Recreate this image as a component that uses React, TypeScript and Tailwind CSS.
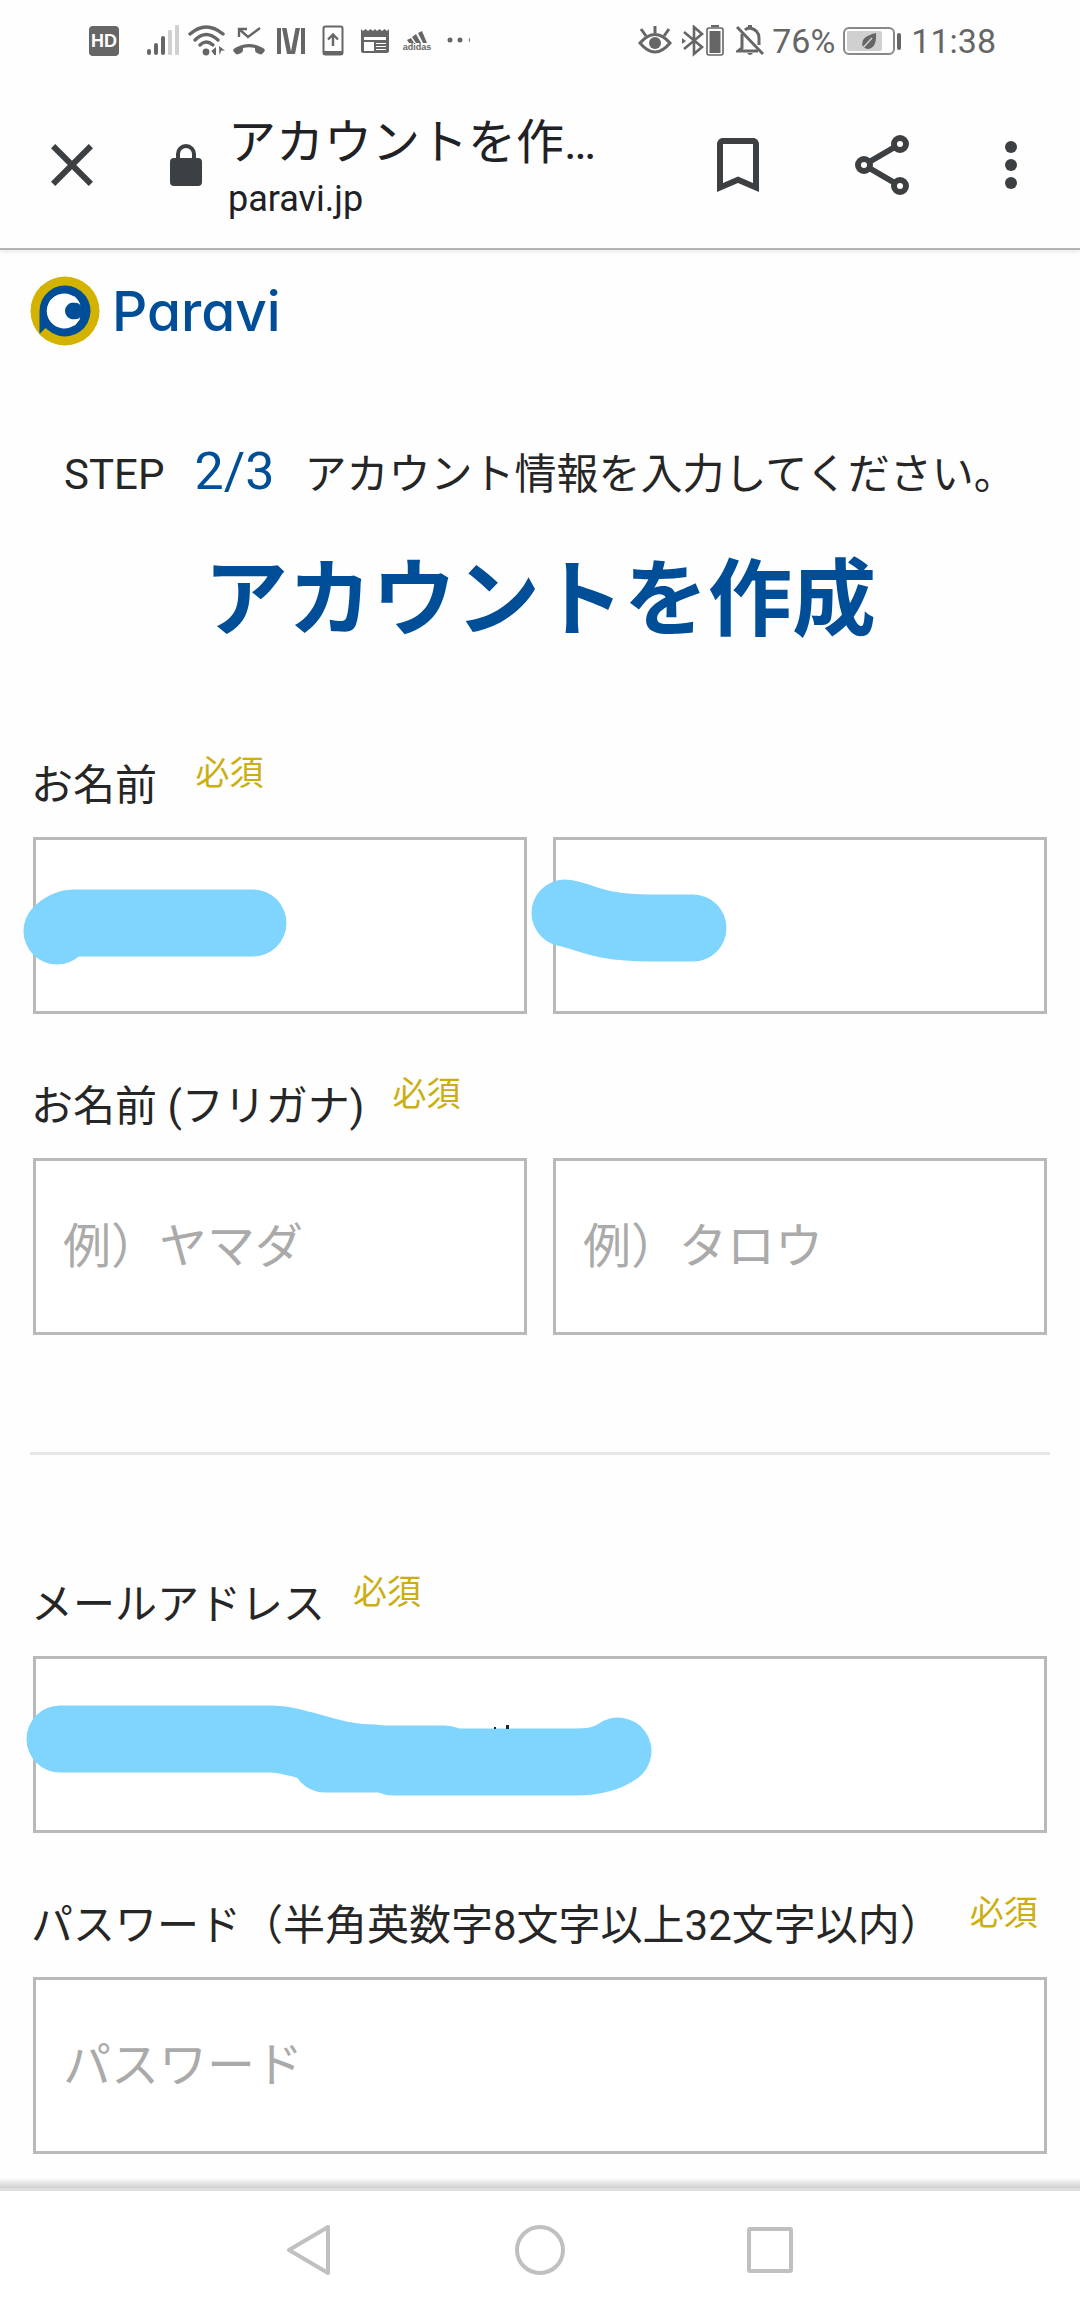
import React, { useState } from 'react';
import type { ReactNode } from 'react';

interface GlyphProps {
  width: number;
  className?: string;
  children: ReactNode;
}

function Glyph({ width, className, children }: GlyphProps) {
  return (
    <svg
      width={width}
      height={32}
      viewBox={`0 0 ${width} 32`}
      fill="#666"
      className={className}
      aria-hidden="true"
    >
      {children}
    </svg>
  );
}

function StatusBar() {
  return (
    <div className="flex h-[82px] items-center justify-between pr-[84px] pl-[89px] text-[34px] leading-none text-[#666]">
      <div className="flex items-center">
        <span className="flex h-[30px] w-[30px] items-center justify-center rounded-[4px] bg-[#666] font-['Liberation_Sans',sans-serif] text-[18px] font-bold text-white">
          HD
        </span>
        <Glyph width={32} className="ml-7">
          <rect x="0" y="24" width="4" height="6" rx="2" />
          <rect x="7" y="18" width="4" height="12" rx="2" />
          <rect x="14" y="11" width="4" height="19" rx="2" />
          <rect x="21" y="5" width="4" height="25" rx="1" fill="#d0d0d0" />
          <rect x="28" y="0" width="4" height="30" rx="1" fill="#d0d0d0" />
        </Glyph>
        <Glyph width={38} className="ml-[9px]">
          <g fill="none" stroke="#666" strokeWidth="3.4" strokeLinecap="round">
            <path d="M2 9 Q18 -5 35 9" />
            <path d="M7 15 Q18 4 30 15" />
            <path d="M12 20 Q18 14 25 20" />
          </g>
          <circle cx="18" cy="27" r="3.4" />
          <path d="M28 22v8h-1.600l-3-4z M31 21l6 4.500h-3.500l-2 4.500z" />
        </Glyph>
        <Glyph width={32} className="ml-[7px]">
          <path d="M6 12V4H14 M6 4L15 12L27 3" fill="none" stroke="#666" strokeWidth="2.400" />
          <path d="M1 27C-1 25 1 23 4 22C12 18 20 18 28 22C31 23 33 25 31 27L29 29C28 30 26 29 24 28C22 27 22 26 22 23C18 22 14 22 10 23C10 26 10 27 8 28C6 29 4 30 3 29Z" />
        </Glyph>
        <Glyph width={30} className="ml-[11px]">
          <path d="M1 3h4v26h-4z M6 3h4.500l5 26h-4.500z M19.500 3h4.500l-5 26h-4.500z M25 3h4v26h-4z" />
        </Glyph>
        <Glyph width={22} className="ml-4">
          <rect x="1.500" y="1.500" width="19" height="28" rx="2" fill="none" stroke="#666" strokeWidth="2" />
          <path d="M1 26h20v4h-20z" />
          <path d="M11 21V10 M6 14.500L11 9.500L16 14.500" fill="none" stroke="#666" strokeWidth="2.400" />
        </Glyph>
        <Glyph width={28} className="ml-[17px]">
          <path d="M0 4l2 2 2.500-2 2.500 2 2.500-2 2.500 2 2-2 2 2 2.500-2 2.500 2 2.500-2 2.500 2 2-2v22q0 2-2 2h-24q-2 0-2-2z" />
          <path d="M3 12h22v3h-22z M3 17h10v9h-10z" fill="#fff" />
          <path d="M15 18.500h10 M15 21.500h10 M15 24.500h10" stroke="#fff" strokeWidth="1" />
        </Glyph>
        <span className="ml-[15px] flex w-[26px] flex-col items-center">
          <svg width="20" height="12" viewBox="0 0 20 12" fill="#666" aria-hidden="true">
            <path d="M0 9l4-2 3 5h-5z M5 6l4-3 5 9h-5z M11 2l4-2 5 12h-4z" />
          </svg>
          <span className="font-['Liberation_Sans',sans-serif] text-[9px] leading-[8px] font-bold">adidas</span>
        </span>
        <Glyph width={24} className="ml-[17px]">
          <circle cx="3" cy="15" r="2.500" />
          <circle cx="13" cy="15" r="2.500" />
          <path d="M23 12.500v5q-2-2.500 0-5z" />
        </Glyph>
      </div>
      <div className="flex items-center">
        <Glyph width={34}>
          <path d="M2 18Q17 1 32 18Q17 36 2 18Z" fill="none" stroke="#666" strokeWidth="3" />
          <circle cx="17" cy="18" r="6" />
          <path d="M17 8V1 M8 11L3 4 M26 11L31 4" stroke="#666" strokeWidth="3" />
        </Glyph>
        <Glyph width={44} className="ml-[10px]">
          <path d="M2 7L20 22L12 29V2L20 9L2 24" fill="none" stroke="#666" strokeWidth="2.600" />
          <path d="M0 13l4 3-4 3z" />
          <rect x="25" y="3" width="16" height="27" rx="2" fill="none" stroke="#666" strokeWidth="1.600" />
          <path d="M29 0h8v2h-8z M27.500 6h11v22h-11z" />
        </Glyph>
        <Glyph width={28} className="ml-[10px]">
          <path d="M6 9V23L2 26H22 M9 5Q11 3 14 3Q23 5 23 13V20" fill="none" stroke="#666" strokeWidth="3" />
          <path d="M12 0h4v4h-4z M11 28h6q-3 4-6 0z" />
          <path d="M1 2L27 29" stroke="#666" strokeWidth="3" />
        </Glyph>
        <span className="ml-2">76%</span>
        <Glyph width={58} className="ml-2">
          <rect x="1" y="3" width="50" height="26" rx="5" fill="none" stroke="#888" strokeWidth="2" />
          <rect x="4" y="6" width="35" height="20" rx="2" fill="#d0d0d0" />
          <path d="M33 8Q34 24 24 24L20 22Q16 12 33 8Z" />
          <path d="M18 25L29 13" stroke="#d0d0d0" strokeWidth="1.500" />
          <rect x="54" y="8" width="4" height="17" rx="2" />
        </Glyph>
        <time className="ml-[10px]">11:38</time>
      </div>
    </div>
  );
}

function BrowserBar() {
  return (
    <header className="flex h-[168px] items-center border-b-2 border-[#b4b4b4] pr-[33px] pl-9 text-[#3c4043] shadow-[0_2px_4px_rgba(0,0,0,0.08)]">
      <button type="button" aria-label="閉じる">
        <svg width="72" height="72" viewBox="0 0 24 24" fill="currentColor">
          <path d="M19 6.410L17.590 5 12 10.590 6.410 5 5 6.410 10.590 12 5 17.590 6.410 19 12 13.410 17.590 19 19 17.590 13.410 12z" />
        </svg>
      </button>
      <svg width="32" height="42" viewBox="0 0 32 42" className="ml-[62px] shrink-0" aria-hidden="true">
        <rect y="14" width="32" height="28" rx="4" fill="currentColor" />
        <path d="M8 16V10a8 8 0 0 1 16 0v6" fill="none" stroke="currentColor" strokeWidth="4" />
      </svg>
      <div className="ml-[26px] min-w-0 flex-1 pt-2 text-[#202124]">
        <p className="text-[48px] leading-[60px]">アカウントを作…</p>
        <p className="text-[36px] leading-[52px]">paravi.jp</p>
      </div>
      <div className="flex items-center">
        <button type="button" aria-label="ブックマーク">
          <svg width="72" height="72" viewBox="0 0 24 24" fill="currentColor">
            <path d="M17 3H7c-1.100 0-2 .9-2 2v16l7-3 7 3V5c0-1.100-.9-2-2-2zm0 15l-5-2.180L7 18V5h10v13z" />
          </svg>
        </button>
        <button type="button" aria-label="共有" className="ml-[72px]">
          <svg width="72" height="72" viewBox="0 0 72 72" fill="none" stroke="currentColor" strokeWidth="6">
            <path d="M18 36L54 15 M18 36L54 57" />
            <g fill="#fff">
              <circle cx="54" cy="15" r="6" />
              <circle cx="18" cy="36" r="6" />
              <circle cx="54" cy="57" r="6" />
            </g>
          </svg>
        </button>
        <button type="button" aria-label="メニュー" className="ml-[57px]">
          <svg width="72" height="72" viewBox="0 0 72 72" fill="currentColor">
            <circle cx="36" cy="18" r="6" />
            <circle cx="36" cy="36" r="6" />
            <circle cx="36" cy="54" r="6" />
          </svg>
        </button>
      </div>
    </header>
  );
}

function Logo() {
  return (
    <a href="#top" className="flex items-center gap-3 text-[#004e98]">
      <svg width="70" height="70" viewBox="0 0 70 70" aria-hidden="true">
        <circle cx="35" cy="35" r="34.500" fill="#d3b200" />
        <path d="M9.500 35A25.500 25.500 0 1 1 18 54L15.500 52L9.500 58Z" fill="#004e98" />
        <path d="M51 30A17.500 17.500 0 1 0 51 40Z" fill="#fff" />
        <circle cx="43.500" cy="35" r="8.500" fill="#004e98" />
        <path d="M44 26.500L54 28V42L44 43.500Z" fill="#004e98" />
        <path d="M43 26.500Q50 26 51 31Q49 24 44 20Z M43 43.500Q50 44 51 39Q49 46 44 50Z" fill="#fff" />
      </svg>
      <span className="font-['Inter',sans-serif] text-[55px] leading-[70px] font-medium [font-feature-settings:'cv11']">
        Paravi
      </span>
    </a>
  );
}

interface FieldRowProps {
  id: string;
  label: string;
  children: ReactNode;
}

function FieldRow({ id, label, children }: FieldRowProps) {
  return (
    <div>
      <div className="-mx-[2px] flex h-[81px] items-start gap-7 whitespace-pre">
        <label htmlFor={id} className="text-[42px] leading-[60px]">
          {label}
        </label>
        <span className="text-[34px] leading-[34px] text-[#ccae12]">必須</span>
      </div>
      <div className="flex gap-[26px]">{children}</div>
    </div>
  );
}

interface TextFieldProps {
  id: string;
  type?: string;
  placeholder?: string;
  label?: string;
  mask?: ReactNode;
}

function TextField({ id, type = 'text', placeholder, label, mask }: TextFieldProps) {
  const [value, setValue] = useState('');

  return (
    <div className="relative min-w-0 flex-1">
      <input
        id={id}
        type={type}
        value={value}
        onChange={(e) => setValue(e.target.value)}
        placeholder={placeholder}
        aria-label={label}
        className="block h-[177px] w-full border-[3px] border-[#b9b9b9] bg-white px-[27px] text-[48px] placeholder:text-[#aaa]"
      />
      {mask && (
        <svg
          className="pointer-events-none absolute top-0 left-0 overflow-visible"
          width="494"
          height="177"
          fill="none"
          stroke="#80d5ff"
          strokeWidth="67"
          strokeLinecap="round"
          strokeLinejoin="round"
          aria-hidden="true"
        >
          {mask}
        </svg>
      )}
    </div>
  );
}

function NavBar() {
  return (
    <nav className="flex h-[121px] items-center justify-center gap-[182px] bg-white pb-[3px] text-[#c0c0c0]">
      <button type="button" aria-label="戻る">
        <svg width="50" height="50" viewBox="0 0 50 50" fill="none" stroke="currentColor" strokeWidth="4" strokeLinejoin="round">
          <path d="M45 2V48L6 25Z" />
        </svg>
      </button>
      <button type="button" aria-label="ホーム">
        <svg width="50" height="50" viewBox="0 0 50 50" fill="none" stroke="currentColor" strokeWidth="4">
          <circle cx="25" cy="25" r="23" />
        </svg>
      </button>
      <button type="button" aria-label="履歴">
        <svg width="50" height="50" viewBox="0 0 50 50" fill="none" stroke="currentColor" strokeWidth="4">
          <rect x="2" y="4" width="42" height="42" rx="1" />
        </svg>
      </button>
    </nav>
  );
}

export default function App() {
  return (
    <div className="flex min-h-screen flex-col bg-[#fefefe] font-['Roboto','Noto_Sans_CJK_JP',sans-serif] text-[#262626]">
      <StatusBar />
      <BrowserBar />
      <main id="top" className="flex-1 px-[33px] pt-[26px] pb-6">
        <div className="-mx-[3px]">
          <Logo />
        </div>
        <p className="mt-[91px] flex items-baseline justify-center gap-[30px] text-[42px] leading-[70px] whitespace-nowrap">
          <span>STEP</span>
          <span className="text-[52px] text-[#004e98]">2/3</span>
          <span>アカウント情報を入力してください。</span>
        </p>
        <h1 className="mt-[31px] text-center text-[84px] leading-[120px] font-bold text-[#004e98]">
          アカウントを作成
        </h1>
        <form className="mt-[95px]" onSubmit={(e) => e.preventDefault()}>
          <div className="flex flex-col gap-[63px]">
            <FieldRow id="last-name" label="お名前 ">
              <TextField id="last-name" mask={<path d="M24 94Q32 86 42 86H220" />} />
              <TextField
                id="first-name"
                label="お名前（名）"
                mask={<path d="M12 76C34 80 46 91 97 91H140" />}
              />
            </FieldRow>
            <FieldRow id="last-kana" label="お名前 (フリガナ)">
              <TextField id="last-kana" placeholder="例）ヤマダ" />
              <TextField id="first-kana" label="フリガナ（名）" placeholder="例）タロウ" />
            </FieldRow>
          </div>
          <hr className="-mx-[3px] mt-[117px] mb-[120px] border-t-[3px] border-[#e6e6e6]" />
          <div className="flex flex-col gap-[63px]">
            <FieldRow id="email" label="メールアドレス">
              <TextField
                id="email"
                type="email"
                mask={
                  <>
                    <path d="M27 83H237C267 83 297 102 342 102" />
                    <path d="M292 103H412" />
                    <path d="M360 106H542Q570 106 585 95" />
                    <path d="M461 71h2v2h-2z M473 69h3v4h-3z" fill="#262626" stroke="none" />
                  </>
                }
              />
            </FieldRow>
            <FieldRow id="password" label="パスワード（半角英数字8文字以上32文字以内）">
              <TextField id="password" type="password" placeholder="パスワード" />
            </FieldRow>
          </div>
        </form>
      </main>
      <div className="h-[10px] bg-linear-to-b from-[#fefefe] to-[#cfcfcf]" />
      <div className="h-[3px] bg-[#dfdfdf]" />
      <NavBar />
    </div>
  );
}
